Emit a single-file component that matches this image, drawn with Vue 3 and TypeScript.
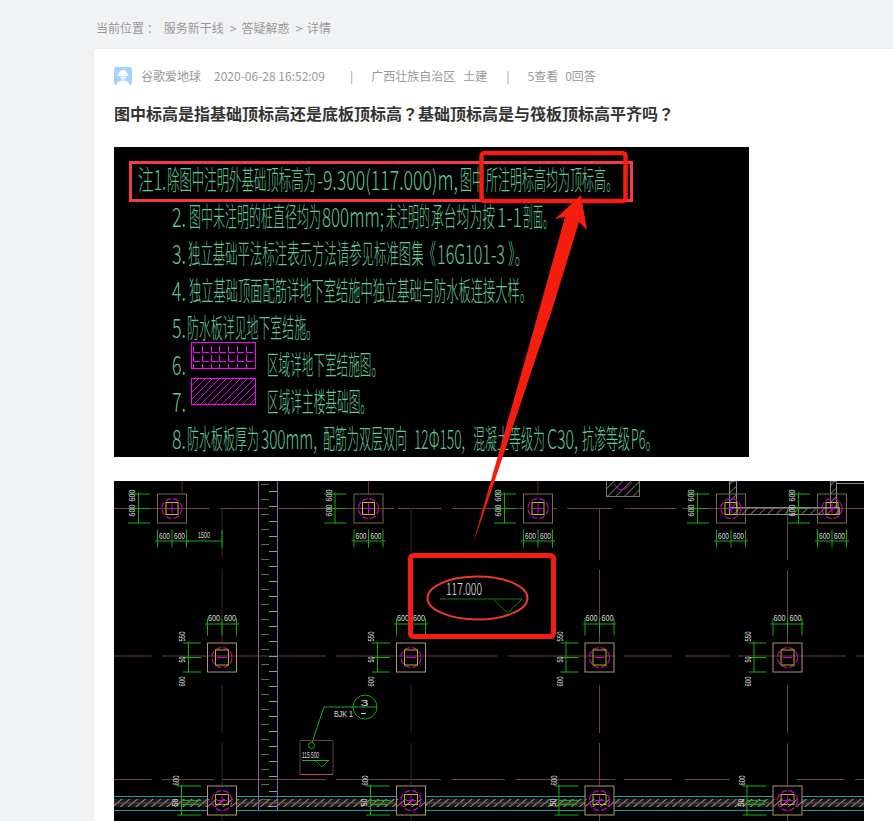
<script setup lang="ts">
// 问答详情页：两张 CAD 截图用 SVG 画，坐标直接取页面坐标（viewBox 对齐）
interface Seg { t: string; x: number; w: number }
interface NoteLine { y: number; segs: Seg[] }

const noteLines: NoteLine[] = [
  { y: 190, segs: [
    { t: "注1.", x: 138, w: 28 },
    { t: "除图中注明外基础顶标高为", x: 167, w: 149 },
    { t: "-9.300(117.000)m,", x: 317, w: 141 },
    { t: "图中", x: 460, w: 24 },
    { t: "所注明标高均为顶标高。", x: 486, w: 132 },
  ] },
  { y: 227, segs: [
    { t: "2.", x: 172, w: 14 },
    { t: "图中未注明的桩直径均为", x: 189, w: 132 },
    { t: "800mm;", x: 322, w: 62 },
    { t: "未注明的", x: 386, w: 44 },
    { t: "承台均为按", x: 431, w: 64 },
    { t: "1-1", x: 497, w: 25 },
    { t: "剖面。", x: 523, w: 30 },
  ] },
  { y: 264, segs: [
    { t: "3.", x: 172, w: 14 },
    { t: "独立基础平法标注表示方法请参见标准图集《", x: 188, w: 248 },
    { t: "16G101-3", x: 437, w: 68 },
    { t: "》。", x: 508, w: 20 },
  ] },
  { y: 301, segs: [
    { t: "4.", x: 172, w: 14 },
    { t: "独立基础顶面配筋详地下室结施中独立基础与防水板连接大样。", x: 189, w: 343 },
  ] },
  { y: 338, segs: [
    { t: "5.", x: 172, w: 14 },
    { t: "防水板详见地下室结施。", x: 187, w: 131 },
  ] },
  { y: 375, segs: [
    { t: "6.", x: 172, w: 14 },
    { t: "区域详地下室结施图。", x: 267, w: 116 },
  ] },
  { y: 412, segs: [
    { t: "7.", x: 172, w: 14 },
    { t: "区域详主楼基础图。", x: 267, w: 105 },
  ] },
  { y: 449, segs: [
    { t: "8.", x: 172, w: 14 },
    { t: "防水板板厚为", x: 187, w: 72 },
    { t: "300mm,", x: 261, w: 56 },
    { t: "配筋为双层双向", x: 323, w: 84 },
    { t: "12Φ150,", x: 414, w: 51 },
    { t: "混凝土等级为", x: 473, w: 72 },
    { t: "C30,", x: 547, w: 31 },
    { t: "抗渗等级", x: 582, w: 48 },
    { t: "P6。", x: 631, w: 27 },
  ] },
];

const brickRows = [346, 355];
const brickCols = [193, 202, 211, 219, 228, 237, 246];
const hatchLines = Array.from({ length: 13 }, (_, i) => 191 + i * 7);

const topCols = [172, 368.5, 538, 731, 832];
const midCols = [222, 411, 599.5, 787.5];

const gridH: [number, number, number][] = [
  [508.5, 114, 210], [508.5, 220, 268], [508.5, 277, 327], [508.5, 340, 394], [508.5, 398, 442],
  [508.5, 452, 523], [508.5, 553, 557], [508.5, 567, 613], [508.5, 625, 677], [508.5, 682, 864],
  [656, 114, 152], [656, 162, 326], [656, 336, 498], [656, 508, 615], [656, 624, 672], [656, 685, 730], [656, 738, 846], [656, 856, 864],
  [779.5, 114, 152], [779.5, 162, 214], [779.5, 222, 326], [779.5, 336, 441], [779.5, 451, 505], [779.5, 515, 615], [779.5, 624, 672], [779.5, 685, 730], [779.5, 797, 845], [779.5, 855, 864],
];
const gridV: [number, number, number, string][] = [
  [182, 481, 494, "#5a3030"], [368.5, 481, 494, "#6a3838"], [538, 481, 494, "#5a3030"],
  [222, 508, 558, "#3d2424"], [222, 569, 643, "#3d2424"], [222, 685, 733, "#3d2424"], [222, 743, 821, "#3d2424"],
  [411, 508, 553, "#3d2424"], [411, 685, 733, "#3d2424"], [411, 743, 821, "#3d2424"],
  [599.5, 508, 560, "#6e4242"], [599.5, 570, 643, "#6e4242"], [599.5, 685, 733, "#6e4242"], [599.5, 743, 821, "#6e4242"],
  [787.5, 508, 560, "#6e4242"], [787.5, 570, 643, "#6e4242"], [787.5, 685, 733, "#6e4242"], [787.5, 743, 821, "#6e4242"],
];

const rulerRight = Array.from({ length: 22 }, (_, i) => 491 + i * 15);
const rulerLeft = Array.from({ length: 22 }, (_, i) => 484 + i * 15);
</script>

<template>
  <div class="page">
    <div class="crumb">
      <span>当前位置 ：</span>
      <span class="crumb__link">服务新干线</span>
      <span class="crumb__sep">&gt;</span>
      <span>答疑解惑</span>
      <span class="crumb__sep">&gt;</span>
      <span>详情</span>
    </div>

    <div class="card">
      <div class="meta">
        <svg class="avatar" viewBox="0 0 18 18" aria-hidden="true">
          <rect width="18" height="18" rx="2" fill="#a6d2ff" />
          <path d="M4.5 8.2C4.5 5 6.4 3 9 3s4.500 2 4.500 5.200z" fill="#fff" />
          <rect x="3.500" y="7.800" width="11" height="1.300" fill="#fff" />
          <path d="M5.800 9.600h6.400C12 11.600 10.800 12.800 9 12.800S6 11.600 5.800 9.600z" fill="#e8f3ff" />
          <path d="M2.500 18c.4-3 3-4.500 6.500-4.500s6.100 1.500 6.500 4.500z" fill="#fff" />
        </svg>
        <span class="meta__name">谷歌爱地球</span>
        <span class="meta__date">2020-06-28 16:52:09</span>
        <span class="meta__bar">|</span>
        <span class="meta__area">广西壮族自治区</span>
        <span class="meta__major">土建</span>
        <span class="meta__bar meta__bar--2">|</span>
        <span class="meta__count">5查看</span>
        <span class="meta__answer">0回答</span>
      </div>

      <h1 class="title">图中标高是指基础顶标高还是底板顶标高<span class="title__mark">？</span>基础顶标高是与筏板顶标高平齐吗<span class="title__mark">？</span></h1>

      <div class="figures">
        <svg class="shot shot--note" viewBox="114 147 635 310" aria-label="设计说明截图">
          <rect x="114" y="147" width="635" height="310" fill="#000" />
          <g v-for="line in noteLines" :key="line.y">
            <text
              v-for="seg in line.segs"
              :key="seg.x"
              class="cad-note"
              :x="seg.x"
              :y="line.y"
              :textLength="seg.w"
              lengthAdjust="spacingAndGlyphs"
            >{{ seg.t }}</text>
          </g>

          <rect x="191.500" y="342.500" width="64" height="26" fill="none" stroke="#f0f" />
          <g fill="none" stroke="#f0f" stroke-width="1">
            <template v-for="r in brickRows" :key="'b' + r">
              <path v-for="c in brickCols" :key="c" :d="`M${c + 0.5} ${r}v6.500h6.500`" />
            </template>
            <line v-for="c in brickCols" :key="'s' + c" :x1="c + 0.5" :x2="c + 0.5" y1="364" y2="368" />
          </g>
          <rect x="191.500" y="378.500" width="64" height="26" fill="none" stroke="#f0f" />
          <clipPath id="hatch-clip"><rect x="192" y="379" width="63" height="25" /></clipPath>
          <g clip-path="url(#hatch-clip)" stroke="#e000e0" stroke-width="1">
            <line v-for="h in hatchLines" :key="h" :x1="h - 26" y1="405" :x2="h" y2="379" />
          </g>

          <rect x="130.500" y="162.500" width="501" height="38" fill="none" stroke="#f43c3c" stroke-width="3" />
        </svg>

        <svg class="shot shot--plan" viewBox="114 481 750 340" aria-label="基础平面图截图">
          <defs>
            <pattern id="wall" width="6" height="6" patternUnits="userSpaceOnUse" patternTransform="rotate(45)">
              <line x1="0" y1="0" x2="0" y2="6" stroke="#8a8a8a" stroke-width="1.500" />
            </pattern>
            <pattern id="band" width="5" height="4" patternUnits="userSpaceOnUse" patternTransform="rotate(50)">
              <line x1="0" y1="0" x2="0" y2="4" stroke="#b4b4b4" stroke-width="1.600" />
            </pattern>
          </defs>
          <rect x="114" y="481" width="750" height="340" fill="#000" />

          <!-- 轴网 -->
          <g stroke="#6e3c3c" stroke-width="1">
            <line v-for="g in gridH" :key="g[0] + '-' + g[1]" :x1="g[1]" :x2="g[2]" :y1="g[0]" :y2="g[0]" />
          </g>
          <line
            v-for="g in gridV"
            :key="g[0] + '/' + g[1]"
            :x1="g[0]"
            :x2="g[0]"
            :y1="g[1]"
            :y2="g[2]"
            :stroke="g[3]"
          />

          <!-- 底部墙带 -->
          <rect x="114" y="799" width="750" height="8" fill="#1c1c1c" />
          <rect x="114" y="799" width="750" height="8" fill="url(#band)" />
          <line x1="114" x2="864" y1="803" y2="803" stroke="#7a4444" />
          <g stroke="#12a0a8">
            <line x1="114" x2="864" y1="796.500" y2="796.500" />
            <line x1="114" x2="864" y1="810.500" y2="810.500" />
          </g>

          <!-- 右上角墙 -->
          <rect x="729.500" y="481" width="7" height="27" fill="url(#wall)" stroke="#8a8a8a" />
          <rect x="729.500" y="507.500" width="110" height="7" fill="url(#wall)" stroke="#8a8a8a" />
          <rect x="830.500" y="481" width="6" height="27" fill="url(#wall)" stroke="#8a8a8a" />
          <line x1="836" y1="483.500" x2="864" y2="483.500" stroke="#8a8a8a" />
          <rect x="606.500" y="478" width="33" height="18.500" fill="url(#wall)" stroke="#777" />
          <path d="M614 484l6 6 6-2 6-5" fill="none" stroke="#a020a0" />

          <!-- 标尺 -->
          <g stroke="#9060b0" stroke-width="1">
            <line x1="258.500" x2="258.500" y1="481" y2="810" />
            <line x1="277.500" x2="277.500" y1="481" y2="810" />
          </g>
          <g stroke="#9a9a9a" stroke-width="1">
            <line v-for="r in rulerRight" :key="r" x1="269" x2="277" :y1="r + 0.5" :y2="r + 0.5" />
          </g>
          <g stroke="#666" stroke-width="1">
            <line v-for="r in rulerLeft" :key="r" x1="261" x2="269" :y1="r + 0.5" :y2="r + 0.5" />
          </g>

          <!-- 第一排承台 -->
          <g v-for="cx in topCols" :key="'t' + cx" :transform="`translate(${cx} 508.500)`">
            <rect x="-14.500" y="-14.500" width="29" height="29" fill="none" stroke="#7d6c48" />
            <circle r="10" fill="none" stroke="#c000c0" stroke-width="1.200" stroke-dasharray="6 2" />
            <rect x="-6" y="-6" width="12" height="12" fill="none" stroke="#c4c400" />
            <path d="M-5 0h10M0-5v10" stroke="#d000d0" />
            <g stroke="#0fb00f">
              <path d="M-33.500-16v31M-44-14.500h22M-44 0h22M-44 14.500h22" />
              <path d="M-14.500 21v18M0 21v18M14.500 21v18M-17 32.500h34" />
            </g>
            <text class="cad-dim" transform="translate(-37 -7) rotate(-90)" textLength="12" lengthAdjust="spacingAndGlyphs">600</text>
            <text class="cad-dim" transform="translate(-37 8) rotate(-90)" textLength="12" lengthAdjust="spacingAndGlyphs">600</text>
            <text class="cad-dim" x="-13" y="30" textLength="11" lengthAdjust="spacingAndGlyphs">600</text>
            <text class="cad-dim" x="2" y="30" textLength="11" lengthAdjust="spacingAndGlyphs">600</text>
          </g>
          <path d="M186 541h36M222 530v18" stroke="#0fb00f" fill="none" />
          <text class="cad-dim" x="198" y="538" textLength="12" lengthAdjust="spacingAndGlyphs">1500</text>

          <!-- 第二、三排承台 -->
          <g v-for="cx in midCols" :key="'m' + cx" :transform="`translate(${cx} 657.500)`">
            <rect x="-14.500" y="-14.500" width="29" height="29" fill="none" stroke="#b09a68" />
            <circle r="10" fill="none" stroke="#c000c0" stroke-width="1.200" stroke-dasharray="6 2" />
            <rect x="-6.500" y="-7.500" width="13" height="15" fill="none" stroke="#b8b800" />
            <path d="M-5 0h10" stroke="#d000d0" />
            <g stroke="#0fb00f">
              <path d="M-33.500-16v31M-39-14.500h18M-39 0h18M-39 14.500h18" />
              <path d="M-14.500-39v17M0-39v17M14.500-39v17M-17-33.500h34" />
            </g>
            <text class="cad-dim" x="-14" y="-37" textLength="12" lengthAdjust="spacingAndGlyphs">600</text>
            <text class="cad-dim" x="2" y="-37" textLength="12" lengthAdjust="spacingAndGlyphs">600</text>
            <text class="cad-dim" transform="translate(-37 -16) rotate(-90)" textLength="10" lengthAdjust="spacingAndGlyphs">550</text>
            <text class="cad-dim" transform="translate(-37 5) rotate(-90)" textLength="6" lengthAdjust="spacingAndGlyphs">50</text>
            <text class="cad-dim" transform="translate(-37 29) rotate(-90)" textLength="10" lengthAdjust="spacingAndGlyphs">600</text>
          </g>
          <g v-for="cx in midCols" :key="'b' + cx" :transform="`translate(${cx} 800.500)`">
            <rect x="-14.500" y="-14.500" width="29" height="29" fill="#000" stroke="#b09a68" />
            <rect x="-14" y="-1.500" width="28" height="8" fill="url(#band)" />
            <circle r="10" fill="none" stroke="#d000d0" stroke-width="1.200" stroke-dasharray="6 2" />
            <rect x="-6.500" y="-6" width="13" height="10" fill="none" stroke="#b8b800" />
            <path d="M-5 0h10M0-5v10" stroke="#d000d0" />
            <g stroke="#0fb00f">
              <path d="M-40.500-16v31M-45-14.500h24M-40.500 0h20M-40.500 4h18M-45 14.500h24" />
            </g>
            <text class="cad-dim" transform="translate(-43 -15) rotate(-90)" textLength="10" lengthAdjust="spacingAndGlyphs">600</text>
            <text class="cad-dim" transform="translate(-44 6) rotate(-90)" textLength="8" lengthAdjust="spacingAndGlyphs">50</text>
          </g>

          <!-- 引出标注 -->
          <g fill="none" stroke="#12b012">
            <circle cx="311.500" cy="745.500" r="3" />
            <path d="M312 742.500L324 707h53" />
            <circle cx="365" cy="707" r="12" />
          </g>
          <text class="cad-dim" x="360.500" y="706" textLength="8" font-size="11" lengthAdjust="spacingAndGlyphs">3</text>
          <line x1="361" x2="366" y1="713.500" y2="713.500" stroke="#ddd" />
          <text class="cad-dim" x="334" y="717" textLength="19" lengthAdjust="spacingAndGlyphs">BJK 1</text>
          <path d="M300 774.500v-34h33v34" fill="none" stroke="#6e3c3c" />
          <line x1="300" x2="333" y1="774.500" y2="774.500" stroke="#c05050" />
          <text class="cad-dim" x="302" y="758" textLength="17" lengthAdjust="spacingAndGlyphs">115.500</text>
          <line x1="302" x2="329" y1="760.500" y2="760.500" stroke="#12c012" />
          <path d="M316 761l6 6 6-6" fill="none" stroke="#0a8a0a" />

          <!-- 红框标高 -->
          <ellipse cx="477.500" cy="598" rx="50" ry="21.500" fill="none" stroke="#e8392e" stroke-width="2" />
          <text class="cad-level" x="446" y="595" textLength="36" lengthAdjust="spacingAndGlyphs">117.000</text>
          <path d="M440 599h82L507.500 613 493 599" fill="none" stroke="#0a800a" />
          <rect x="410.500" y="555.500" width="143" height="81" rx="3" fill="none" stroke="#f51d10" stroke-width="5" />
        </svg>

        <svg class="overlay" viewBox="114 147 779 674" aria-hidden="true">
          <rect x="481.500" y="153" width="144" height="48" rx="3" fill="none" stroke="#f51d10" stroke-width="4.500" />
          <path d="M473 544L540 307 565 217 555 219 581 195 587 230 579 222 553 307 495 480z" fill="#f51d10" />
        </svg>
      </div>
    </div>
  </div>
</template>

<style scoped>
.page {
  height: 821px;
  overflow: hidden;
  background: #f1f2f4;
  font-family: "Noto Sans CJK SC", "Noto Sans", sans-serif;
}

.crumb {
  display: flex;
  align-items: center;
  height: 49px;
  padding: 6px 0 0 96px;
  box-sizing: border-box;
  font-size: 12px;
  color: #999;
}
.crumb__link { margin-left: 5px; }
.crumb__sep { margin: 0 5px 0 6px; }

.card {
  margin-left: 94px;
  padding: 0 0 0 20px;
  height: 772px;
  background: #fff;
  box-shadow: 0 0 3px rgba(0, 0, 0, 0.06);
}

.meta {
  display: flex;
  align-items: center;
  height: 18px;
  padding-top: 18px;
  font-size: 12px;
  color: #999;
  line-height: 18px;
}
.avatar { width: 18px; height: 18px; flex: none; }
.meta__name { margin-left: 9px; }
.meta__date { margin-left: 13px; }
.meta__bar { margin-left: 25px; }
.meta__area { margin-left: 18px; }
.meta__major { margin-left: 8px; }
.meta__bar--2 { margin-left: 19px; }
.meta__count { margin-left: 18px; }
.meta__answer { margin-left: 7px; }

.title {
  margin: 16px 0 0;
  height: 26px;
  font-size: 16px;
  line-height: 24px;
  font-weight: 700;
  color: #333;
}
.title__mark { font-family: "Noto Sans CJK TC", sans-serif; }

.figures {
  position: relative;
  margin-top: 20px;
}
.shot { display: block; }
.shot--note { width: 635px; height: 310px; }
.shot--plan { width: 750px; height: 340px; margin-top: 24px; }

/* 红色标注叠在两张图上 */
.overlay {
  position: absolute;
  left: 0;
  top: 0;
  width: 779px;
  height: 674px;
  pointer-events: none;
}

.cad-note {
  font-family: "Noto Sans CJK SC", "Noto Sans", sans-serif;
  font-size: 27px;
  font-weight: 200;
  fill: #62c89b;
}
.cad-dim {
  font-family: "Liberation Sans", sans-serif;
  font-size: 9px;
  fill: #ddd;
}
.cad-level {
  font-family: "Noto Sans CJK SC", sans-serif;
  font-size: 17px;
  font-weight: 200;
  fill: #e8e8e8;
}
</style>

<style>
html, body { margin: 0; background: #f1f2f4; overflow: hidden; }
</style>
